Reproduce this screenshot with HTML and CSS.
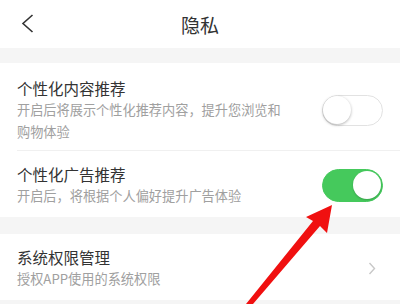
FILE: index.html
```html
<!DOCTYPE html>
<html lang="zh-CN">
<head>
  <meta charset="UTF-8">
  <meta name="viewport" content="width=device-width, initial-scale=1.0">
  <title>隐私</title>
  <link rel="stylesheet" href="styles.css">
</head>
<body>

  <!-- Header -->
  <div class="header">
    <svg class="back" width="14" height="22" viewBox="0 0 14 22">
      <polyline points="11.5,2 2,10.5 11.5,19" fill="none" stroke="#333" stroke-width="1.6"/>
    </svg>
    <div class="title">隐私</div>
  </div>

  <div class="gap"></div>

  <!-- Recommend settings -->
  <div class="group">
    <div class="item first">
      <div class="text">
        <div class="name">个性化内容推荐</div>
        <div class="desc">开启后将展示个性化推荐内容，提升您浏览和购物体验</div>
      </div>
      <div class="switch"><span class="knob"></span></div>
    </div>
    <div class="item">
      <div class="text">
        <div class="name">个性化广告推荐</div>
        <div class="desc">开启后，将根据个人偏好提升广告体验</div>
      </div>
      <div class="switch on"><span class="knob"></span></div>
    </div>
  </div>

  <div class="gap tall"></div>

  <div class="group">
    <div class="item">
      <div class="text">
        <div class="name">系统权限管理</div>
        <div class="desc">授权APP使用的系统权限</div>
      </div>
      <svg class="more" width="8" height="13" viewBox="0 0 8 13">
        <polyline points="1.5,1 6.5,6.5 1.5,12" fill="none" stroke="#c8c8c8" stroke-width="1.4"/>
      </svg>
    </div>
  </div>

  <div class="gap"></div>

  <!-- red arrow pointing at the switch -->
  <svg class="arrow" width="400" height="304" viewBox="0 0 400 304">
    <polygon points="332,205 327,233 320,226 253,304 246,304 313,221 306,217" fill="#f01010"/>
  </svg>

</body>
</html>
```

FILE: styles.css
```css
* {
  box-sizing: border-box;
}

body {
  margin: 0;
  font-family: "Noto Sans CJK SC", "Noto Sans", sans-serif;
  background: #f5f5f5;
  color: #333;
  overflow: hidden;
  position: relative;
  height: 304px;
}

.header {
  height: 48px;
  background: #fff;
  display: flex;
  align-items: center;
  justify-content: center;
  position: relative;
}

.back {
  position: absolute;
  left: 21px;
  top: 13px;
}

.title {
  font-size: 19px;
  color: #333;
}

.gap {
  height: 15px;
}

.gap.tall {
  height: 17px;
}

.group {
  background: #fff;
}

.item {
  display: flex;
  align-items: center;
  margin-left: 17px;
  padding: 12px 17px 10px 0;
  border-bottom: 1px solid #f0f0f0;
}

.item.first {
  padding-top: 14px;
  padding-bottom: 7px;
}

.group .item:last-child {
  border-bottom: none;
}

.text {
  flex: 1;
  margin-right: 35px;
}

.name {
  font-size: 15.5px;
  line-height: 22px;
  color: #333;
}

.desc {
  font-size: 13.2px;
  line-height: 22px;
  color: #a0a0a0;
}

.switch {
  width: 61px;
  height: 31px;
  border-radius: 16px;
  border: 1.5px solid #e2e2e2;
  background: #fff;
  position: relative;
  flex-shrink: 0;
}

.knob {
  position: absolute;
  top: 0;
  left: 0;
  width: 28px;
  height: 28px;
  border-radius: 50%;
  background: #fff;
  box-shadow: 0 1px 3px rgba(0, 0, 0, 0.3);
}

.switch.on {
  background: #45c95c;
  border-color: #45c95c;
  height: 33px;
  border-radius: 17px;
}

.switch.on .knob {
  left: auto;
  right: 1px;
  top: 1px;
  box-shadow: 0 1px 2px rgba(0, 0, 0, 0.2);
}

.more {
  margin-right: 7px;
}

.arrow {
  position: absolute;
  top: 0;
  left: 0;
}
```
